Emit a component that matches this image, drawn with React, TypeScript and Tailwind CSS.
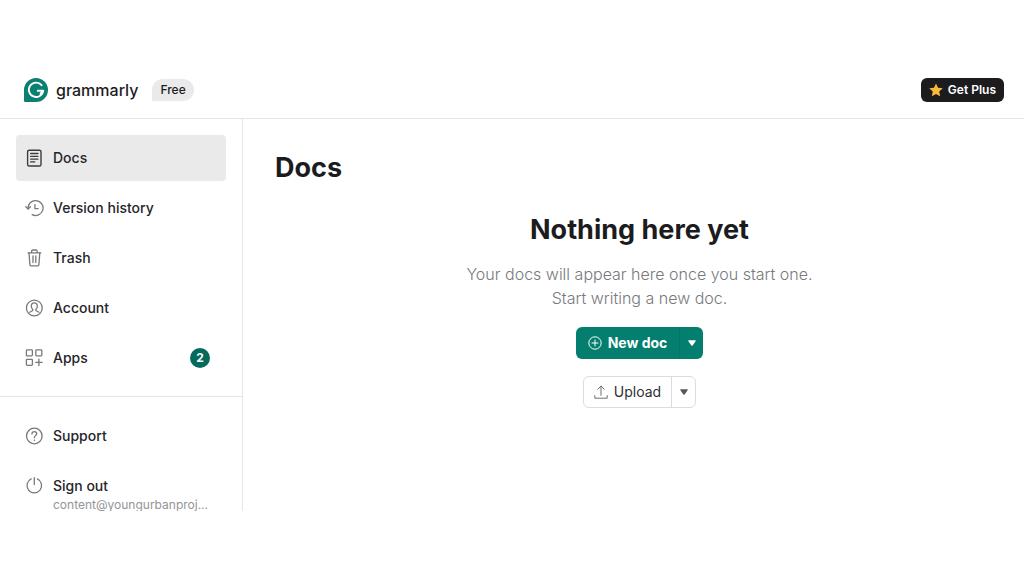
import type { ReactNode } from 'react'

function Icon({ children, className = 'text-[#77797c]' }: { children: ReactNode; className?: string }) {
  return (
    <svg
      viewBox="0 0 20 20"
      className={`size-5 shrink-0 ${className}`}
      fill="none"
      stroke="currentColor"
      strokeWidth="1.3"
      strokeLinecap="round"
      strokeLinejoin="round"
      aria-hidden="true"
    >
      {children}
    </svg>
  )
}

const docsIcon = (
  <Icon className="text-[#3c3c3e]">
    <rect x="3.6" y="2.2" width="13.4" height="15.8" rx="1.6" strokeWidth="1.4" />
    <path d="M6.6 5.5h7.4M6.6 8.3h7.4M6.6 11.1h7.4M6.6 13.9h4.2" strokeWidth="1.3" />
  </Icon>
)

const historyIcon = (
  <Icon>
    <path d="M4.1 10.8a7.5 7.5 0 1 1 4 5.9" />
    <path d="M1.8 8.7l2.3 2.3 2.3-2.3" />
    <path d="M10.9 6.6v4h3.2" />
  </Icon>
)

const trashIcon = (
  <Icon>
    <path d="M4 4.8h12.8M7.6 4.6V3.2c0-.7.5-1.2 1.2-1.2h3.2c.7 0 1.2.5 1.2 1.2v1.4" />
    <path d="M5 4.8l.9 11.8c.1.8.6 1.3 1.4 1.3h6.2c.8 0 1.3-.5 1.4-1.3l.9-11.8" />
    <path d="M9 7.8v6.8M11.8 7.8v6.8" />
  </Icon>
)

const accountIcon = (
  <Icon>
    <circle cx="10.3" cy="10" r="7.9" />
    <path d="M7.3 8.2c0-2.1 1.2-3.3 3-3.3s3 1.2 3 3.3c0 1.4-.6 2.6-1.5 3.3v1l3.2 1.7M7.3 8.2c0 1.4.6 2.6 1.5 3.3v1l-3.2 1.7" />
  </Icon>
)

const appsIcon = (
  <Icon>
    <rect x="2.4" y="1.9" width="6" height="6" rx=".8" />
    <rect x="11.8" y="1.9" width="6" height="6" rx=".8" />
    <rect x="2.4" y="11.3" width="6" height="6" rx=".8" />
    <path d="M14.9 11.1v6.4M11.7 14.3h6.4" />
  </Icon>
)

const supportIcon = (
  <Icon>
    <circle cx="10.3" cy="10" r="7.8" />
    <path d="M7.9 7.9c0-1.4 1-2.3 2.4-2.3s2.4.9 2.4 2.2c0 1.8-2.4 1.9-2.4 4" />
    <circle cx="10.3" cy="14.3" r=".8" fill="currentColor" stroke="none" />
  </Icon>
)

const signOutIcon = (
  <Icon>
    <path d="M7.2 2.9a7.3 7.3 0 1 0 6.2 0M10.3 1.6v7" />
  </Icon>
)

interface NavItemProps {
  icon: ReactNode
  label: string
  note?: string
  badge?: number
  active?: boolean
}

function NavItem({ icon, label, note, badge, active }: NavItemProps) {
  return (
    <a
      href="#"
      aria-current={active ? 'page' : undefined}
      className={`flex h-[46px] items-center gap-[9px] rounded px-2 ${active ? 'bg-[#eaeaea]' : ''}`}
    >
      {icon}
      <span className="min-w-0 grow">
        <span className="block text-sm leading-5 font-medium text-[#252528]">{label}</span>
        {note && (
          <span className="-mb-[15px] block truncate pt-[3px] text-xs leading-3 text-[#939598]">{note}</span>
        )}
      </span>
      {badge && (
        <span className="mr-2 flex size-5 items-center justify-center rounded-full bg-[#046a5c] text-xs font-bold text-white">
          {badge}
        </span>
      )}
    </a>
  )
}

function Caret() {
  return (
    <svg viewBox="0 0 8 6" className="h-1.5 w-2" fill="currentColor" aria-hidden="true">
      <path d="M.9.3h6.2c.6 0 .8.5.5.9L4.6 5.4c-.3.4-.9.4-1.2 0L.4 1.2C.1.8.3.3.9.3z" />
    </svg>
  )
}

export default function App() {
  return (
    <div className="bg-white pt-15 pb-16 font-['Inter',sans-serif] text-[#1c1c1e]">
      {/* Header */}
      <header className="flex h-[59px] items-center justify-between border-b border-[#e6e6e6] px-5 pt-0.5 pl-6">
        <div className="flex items-center">
          <a href="#" className="flex items-center gap-2">
            <svg viewBox="0 0 24 24" className="size-6" aria-hidden="true">
              <path d="M12 0a12 12 0 1 1 0 24H1.2A1.2 1.2 0 0 1 0 22.8V12A12 12 0 0 1 12 0z" fill="#0b8070" />
              <path
                d="M17.6 7.2A7.2 7.2 0 1 0 19.2 12.7h-5.4M16.6 15.6l2.5-2.9"
                fill="none"
                stroke="#fff"
                strokeWidth="1.9"
                strokeLinecap="round"
                strokeLinejoin="round"
              />
            </svg>
            <span className="text-base leading-6 font-medium">grammarly</span>
          </a>
          <span className="ml-3.5 rounded-full rounded-bl-sm bg-[#eaeaea] px-2 text-xs leading-[22px] font-medium">
            Free
          </span>
        </div>
        <button className="flex h-6 items-center gap-[5px] rounded-md bg-[#1c1c1e] px-2 text-xs font-semibold text-white">
          <svg viewBox="0 0 14 14" className="size-3.5" fill="#f9b93a" aria-hidden="true">
            <path d="M7 .4l2 4.4 4.8.5-3.6 3.2 1 4.8L7 10.9l-4.2 2.4 1-4.8L.2 5.3 5 4.8z" />
          </svg>
          Get Plus
        </button>
      </header>

      <div className="flex">
        {/* Sidebar */}
        <aside className="w-[243px] shrink-0 border-r border-[#e6e6e6] pb-0.5">
          <nav className="flex flex-col gap-1 border-b border-[#e6e6e6] px-4 pt-4 pb-[15px]">
            <NavItem icon={docsIcon} label="Docs" active />
            <NavItem icon={historyIcon} label="Version history" />
            <NavItem icon={trashIcon} label="Trash" />
            <NavItem icon={accountIcon} label="Account" />
            <NavItem icon={appsIcon} label="Apps" badge={2} />
          </nav>
          <nav className="flex flex-col gap-1 px-4 pt-4">
            <NavItem icon={supportIcon} label="Support" />
            <NavItem icon={signOutIcon} label="Sign out" note="content@youngurbanproj..." />
          </nav>
        </aside>

        {/* Content */}
        <main className="grow px-8 pt-[33px]">
          <h1 className="text-[27px] leading-8 font-bold">Docs</h1>
          <section className="mt-7 flex flex-col items-center pl-3 text-center">
            <h2 className="text-[27px] leading-9 font-bold">Nothing here yet</h2>
            <p className="mt-3.5 text-base leading-6 font-light text-[#77797d]">
              Your docs will appear here once you start one.
              <br />
              Start writing a new doc.
            </p>
            <div className="mt-[17px] flex h-8 overflow-hidden rounded-md bg-[#047e6e] text-white">
              <button className="flex items-center gap-1.5 px-3 text-sm font-bold">
                <svg viewBox="0 0 14 14" className="size-3.5" fill="none" stroke="currentColor" aria-hidden="true">
                  <circle cx="7" cy="7" r="6.2" />
                  <path d="M7 4v6M4 7h6" strokeLinecap="round" />
                </svg>
                New doc
              </button>
              <button aria-label="More new doc options" className="flex w-6 items-center justify-center border-l border-[#047566]">
                <Caret />
              </button>
            </div>
            <div className="mt-[17px] flex h-8 rounded-md border border-[#dcdcde] text-[#2f2f32]">
              <button className="flex items-center gap-1.5 px-2.5 text-sm">
                <svg
                  viewBox="0 0 14 14"
                  className="size-3.5 text-[#6d6f73]"
                  fill="none"
                  stroke="currentColor"
                  strokeLinecap="round"
                  strokeLinejoin="round"
                  aria-hidden="true"
                >
                  <path d="M.8 10.6v2.6h12.4v-2.6M7 10.4V1.2M3.8 4.2L7 1l3.2 3.2" />
                </svg>
                Upload
              </button>
              <button aria-label="More upload options" className="flex w-6 items-center justify-center border-l border-[#dcdcde] text-[#55575b]">
                <Caret />
              </button>
            </div>
          </section>
        </main>
      </div>
    </div>
  )
}
